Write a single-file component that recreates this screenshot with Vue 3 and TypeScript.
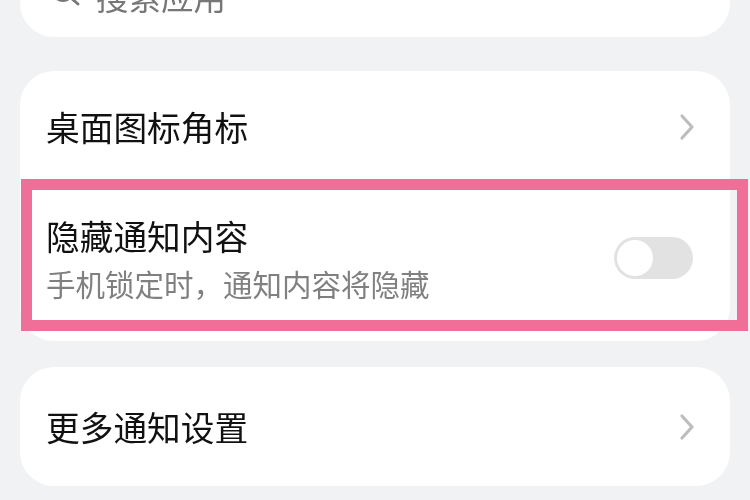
<script setup lang="ts">
const chevron = 'M3 3 L13 14 L3 25'
</script>

<template>
  <div class="page">
    <div class="card search">
      <svg class="search-icon" width="34" height="34" viewBox="0 0 34 34" fill="none">
        <circle cx="14" cy="14" r="10.5" stroke="#777" stroke-width="2.8" />
        <path d="M22 22 L29 28" stroke="#777" stroke-width="2.8" stroke-linecap="round" />
      </svg>
      <span class="search-text">搜索应用</span>
    </div>

    <div class="card group">
      <div class="row top-row">
        <span class="title">桌面图标角标</span>
        <svg class="chevron" width="16" height="28" viewBox="0 0 16 28" fill="none">
          <path :d="chevron" stroke="#bdbdbd" stroke-width="3.2" stroke-linecap="round" stroke-linejoin="round" />
        </svg>
      </div>
      <div class="row hide-row">
        <div class="text-stack">
          <span class="title">隐藏通知内容</span>
          <span class="subtitle">手机锁定时，通知内容将隐藏</span>
        </div>
        <div class="switch"><span class="knob"></span></div>
      </div>
    </div>

    <div class="card bottom">
      <span class="title">更多通知设置</span>
      <svg class="chevron" width="16" height="28" viewBox="0 0 16 28" fill="none">
        <path :d="chevron" stroke="#bdbdbd" stroke-width="3.2" stroke-linecap="round" stroke-linejoin="round" />
      </svg>
    </div>

    <div class="highlight"></div>
  </div>
</template>

<style>
html, body { margin: 0; background: #f1f2f4; }
</style>

<style scoped>
.page {
  position: relative;
  width: 750px;
  height: 500px;
  overflow: hidden;
  box-sizing: border-box;
  padding: 0 20px;
  display: flex;
  flex-direction: column;
  background: #f1f2f4;
  font-family: "Noto Sans CJK SC", "Noto Sans", sans-serif;
  filter: blur(0.7px);
}
.card {
  background: #fff;
  border-radius: 34px;
}
.search {
  height: 37px;
  border-radius: 0 0 34px 34px;
  flex: none;
  display: flex;
  align-items: flex-end;
  overflow: hidden;
  padding-left: 29px;
}
.search-icon {
  flex: none;
  margin-bottom: 27px;
}
.search-text {
  margin-left: 13px;
  font-size: 32.5px;
  line-height: 48px;
  margin-bottom: 17px;
  color: #777;
  white-space: nowrap;
}
.group {
  margin-top: 34px;
  height: 270px;
  flex: none;
  display: flex;
  flex-direction: column;
}
.row {
  display: flex;
  align-items: center;
  justify-content: space-between;
  padding: 0 26px;
}
.top-row {
  height: 112px;
}
.hide-row {
  height: 150px;
  padding-right: 37px;
}
.title {
  font-size: 33.7px;
  line-height: 44px;
  color: #111;
  white-space: nowrap;
}
.subtitle {
  font-size: 29.5px;
  line-height: 40px;
  color: #808080;
  white-space: nowrap;
}
.text-stack {
  display: flex;
  flex-direction: column;
  gap: 5px;
}
.chevron {
  flex: none;
}
.top-row .chevron { margin-right: 9px; }
.switch {
  width: 79px;
  height: 42px;
  border-radius: 21px;
  background: #e2e2e2;
  box-sizing: border-box;
  padding: 3px;
  flex: none;
}
.knob {
  display: block;
  width: 36px;
  height: 36px;
  border-radius: 50%;
  background: #fff;
}
.bottom {
  margin-top: 26px;
  height: 119px;
  box-sizing: border-box;
  flex: none;
  display: flex;
  align-items: center;
  justify-content: space-between;
  padding: 0 35px 0 26px;
}
.highlight {
  position: absolute;
  left: 21px;
  top: 179px;
  width: 727px;
  height: 152px;
  box-sizing: border-box;
  border: 11.5px solid #f06f98;
  pointer-events: none;
}
</style>
